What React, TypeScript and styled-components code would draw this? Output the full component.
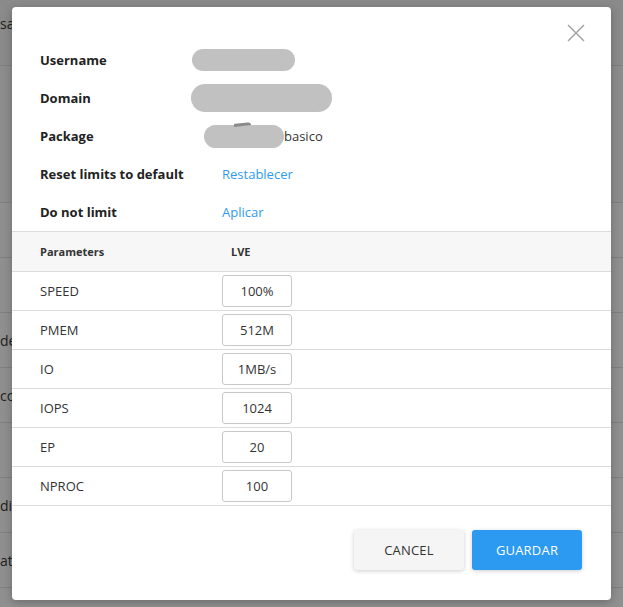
import styled, { createGlobalStyle } from "styled-components";

const GlobalStyle = createGlobalStyle`
  html, body {
    margin: 0;
    padding: 0;
  }
  body {
    width: 623px;
    height: 607px;
    overflow: hidden;
    font-family: "Open Sans", "Noto Sans", sans-serif;
    background: #ffffff;
  }
`;

const Page = styled.div`
  position: relative;
  width: 623px;
  height: 607px;
  overflow: hidden;
`;

const BackPage = styled.div`
  display: flex;
  flex-direction: column;
  color: #333;
  font-size: 13px;
`;

const BackBand = styled.div<{ $h: number; $bg: string }>`
  height: ${(p) => p.$h}px;
  background: ${(p) => p.$bg};
  border-bottom: 1px solid #e2e2e2;
  box-sizing: border-box;
  display: flex;
  align-items: flex-start;
  padding-top: 14px;
`;

const BackRow = styled.div`
  height: 55px;
  border-bottom: 1px solid #e2e2e2;
  box-sizing: border-box;
  display: flex;
  align-items: center;
`;

const BackText = styled.span`
  color: #3a3a3a;
  font-size: 14px;
`;

const Overlay = styled.div`
  position: absolute;
  inset: 0;
  background: rgba(0, 0, 0, 0.44);
`;

const Modal = styled.div`
  position: absolute;
  left: 12px;
  top: 7px;
  width: 599px;
  height: 593px;
  background: #fff;
  border-radius: 4px;
  box-shadow: 0 2px 8px rgba(0, 0, 0, 0.25);
  display: flex;
  flex-direction: column;
`;

const CloseBtn = styled.button`
  position: absolute;
  right: 26px;
  top: 17px;
  width: 18px;
  height: 18px;
  padding: 0;
  border: none;
  background: transparent;
  cursor: pointer;
`;

const InfoList = styled.div`
  padding: 34px 0 0 28px;
  display: flex;
  flex-direction: column;
`;

const InfoRow = styled.div`
  height: 38px;
  display: grid;
  grid-template-columns: 182px 1fr;
  align-items: center;
`;

const InfoLabel = styled.div`
  font-weight: 700;
  font-size: 13px;
  color: #222;
`;

const InfoValue = styled.div`
  font-size: 13px;
  color: #333;
  display: flex;
  align-items: center;
  position: relative;
`;

const Blur = styled.span<{ $w: number; $h: number; $ml: number }>`
  display: inline-block;
  width: ${(p) => p.$w}px;
  height: ${(p) => p.$h}px;
  margin-left: ${(p) => p.$ml}px;
  border-radius: ${(p) => p.$h / 2}px;
  background: #c1c1c1;
`;

const Smudge = styled.span`
  position: absolute;
  left: 12px;
  top: -2px;
  width: 17px;
  height: 3px;
  border-radius: 2px 6px 0 0;
  background: #8a8a8a;
  transform: rotate(-6deg);
`;

const Link = styled.a`
  color: #2f9bf0;
  font-size: 13px;
  text-decoration: none;
  cursor: pointer;
`;

const Table = styled.div`
  display: flex;
  flex-direction: column;
  border-top: 1px solid #dcdcdc;
`;

const Row = styled.div<{ $head?: boolean }>`
  height: ${(p) => (p.$head ? 39 : 38)}px;
  background: ${(p) => (p.$head ? "#f7f7f7" : "#fff")};
  border-bottom: 1px solid #dcdcdc;
  display: grid;
  grid-template-columns: 182px 1fr;
  align-items: center;
  padding-left: 28px;
`;

const HeadCell = styled.div<{ $indent?: number }>`
  font-size: 11px;
  font-weight: 700;
  color: #333;
  padding-left: ${(p) => p.$indent ?? 0}px;
`;

const ParamName = styled.div`
  font-size: 13px;
  color: #333;
`;

const ValueInput = styled.input`
  width: 70px;
  height: 32px;
  box-sizing: border-box;
  border: 1px solid #c8c8c8;
  border-radius: 3px;
  text-align: center;
  font-family: "Open Sans", "Noto Sans", sans-serif;
  font-size: 13px;
  color: #333;
  padding: 0;
  outline: none;
`;

const Footer = styled.div`
  display: flex;
  justify-content: flex-end;
  gap: 8px;
  padding: 24px 29px 0 0;
`;

const Button = styled.button<{ $primary?: boolean }>`
  width: 110px;
  height: 40px;
  border: none;
  border-radius: 3px;
  font-family: "Open Sans", "Noto Sans", sans-serif;
  font-size: 13px;
  letter-spacing: 0.2px;
  cursor: pointer;
  background: ${(p) => (p.$primary ? "#2d9af1" : "#f5f5f5")};
  color: ${(p) => (p.$primary ? "#fff" : "#333")};
  box-shadow: 0 1px 4px rgba(0, 0, 0, 0.2);
`;

const params = [
  { name: "SPEED", value: "100%" },
  { name: "PMEM", value: "512M" },
  { name: "IO", value: "1MB/s" },
  { name: "IOPS", value: "1024" },
  { name: "EP", value: "20" },
  { name: "NPROC", value: "100" },
];

const backRows = ["", "", "de", "cc", "", "di", "at"];

export default function App() {
  return (
    <Page>
      <GlobalStyle />
      <BackPage>
        <BackBand $h={66} $bg="#f6f6f6">
          <BackText>sag</BackText>
        </BackBand>
        <BackBand $h={137} $bg="#f9f9f9" />
        {backRows.map((t, i) => (
          <BackRow key={i}>
            <BackText>{t}</BackText>
          </BackRow>
        ))}
      </BackPage>
      <Overlay />
      <Modal>
        <CloseBtn aria-label="Close">
          <svg width="18" height="18" viewBox="0 0 18 18">
            <path
              d="M1 1 L17 17 M17 1 L1 17"
              stroke="#a0a0a0"
              strokeWidth="1.4"
              fill="none"
            />
          </svg>
        </CloseBtn>
        <InfoList>
          <InfoRow>
            <InfoLabel>Username</InfoLabel>
            <InfoValue>
              <Blur $w={103} $h={22} $ml={-30} />
            </InfoValue>
          </InfoRow>
          <InfoRow>
            <InfoLabel>Domain</InfoLabel>
            <InfoValue>
              <Blur $w={141} $h={28} $ml={-31} />
            </InfoValue>
          </InfoRow>
          <InfoRow>
            <InfoLabel>Package</InfoLabel>
            <InfoValue>
              <Smudge />
              <Blur $w={80} $h={23} $ml={-18} />
              <span>basico</span>
            </InfoValue>
          </InfoRow>
          <InfoRow>
            <InfoLabel>Reset limits to default</InfoLabel>
            <InfoValue>
              <Link>Restablecer</Link>
            </InfoValue>
          </InfoRow>
          <InfoRow>
            <InfoLabel>Do not limit</InfoLabel>
            <InfoValue>
              <Link>Aplicar</Link>
            </InfoValue>
          </InfoRow>
        </InfoList>
        <Table>
          <Row $head>
            <HeadCell>Parameters</HeadCell>
            <HeadCell $indent={9}>LVE</HeadCell>
          </Row>
          {params.map((p) => (
            <Row key={p.name}>
              <ParamName>{p.name}</ParamName>
              <div>
                <ValueInput defaultValue={p.value} />
              </div>
            </Row>
          ))}
        </Table>
        <Footer>
          <Button>CANCEL</Button>
          <Button $primary>GUARDAR</Button>
        </Footer>
      </Modal>
    </Page>
  );
}
